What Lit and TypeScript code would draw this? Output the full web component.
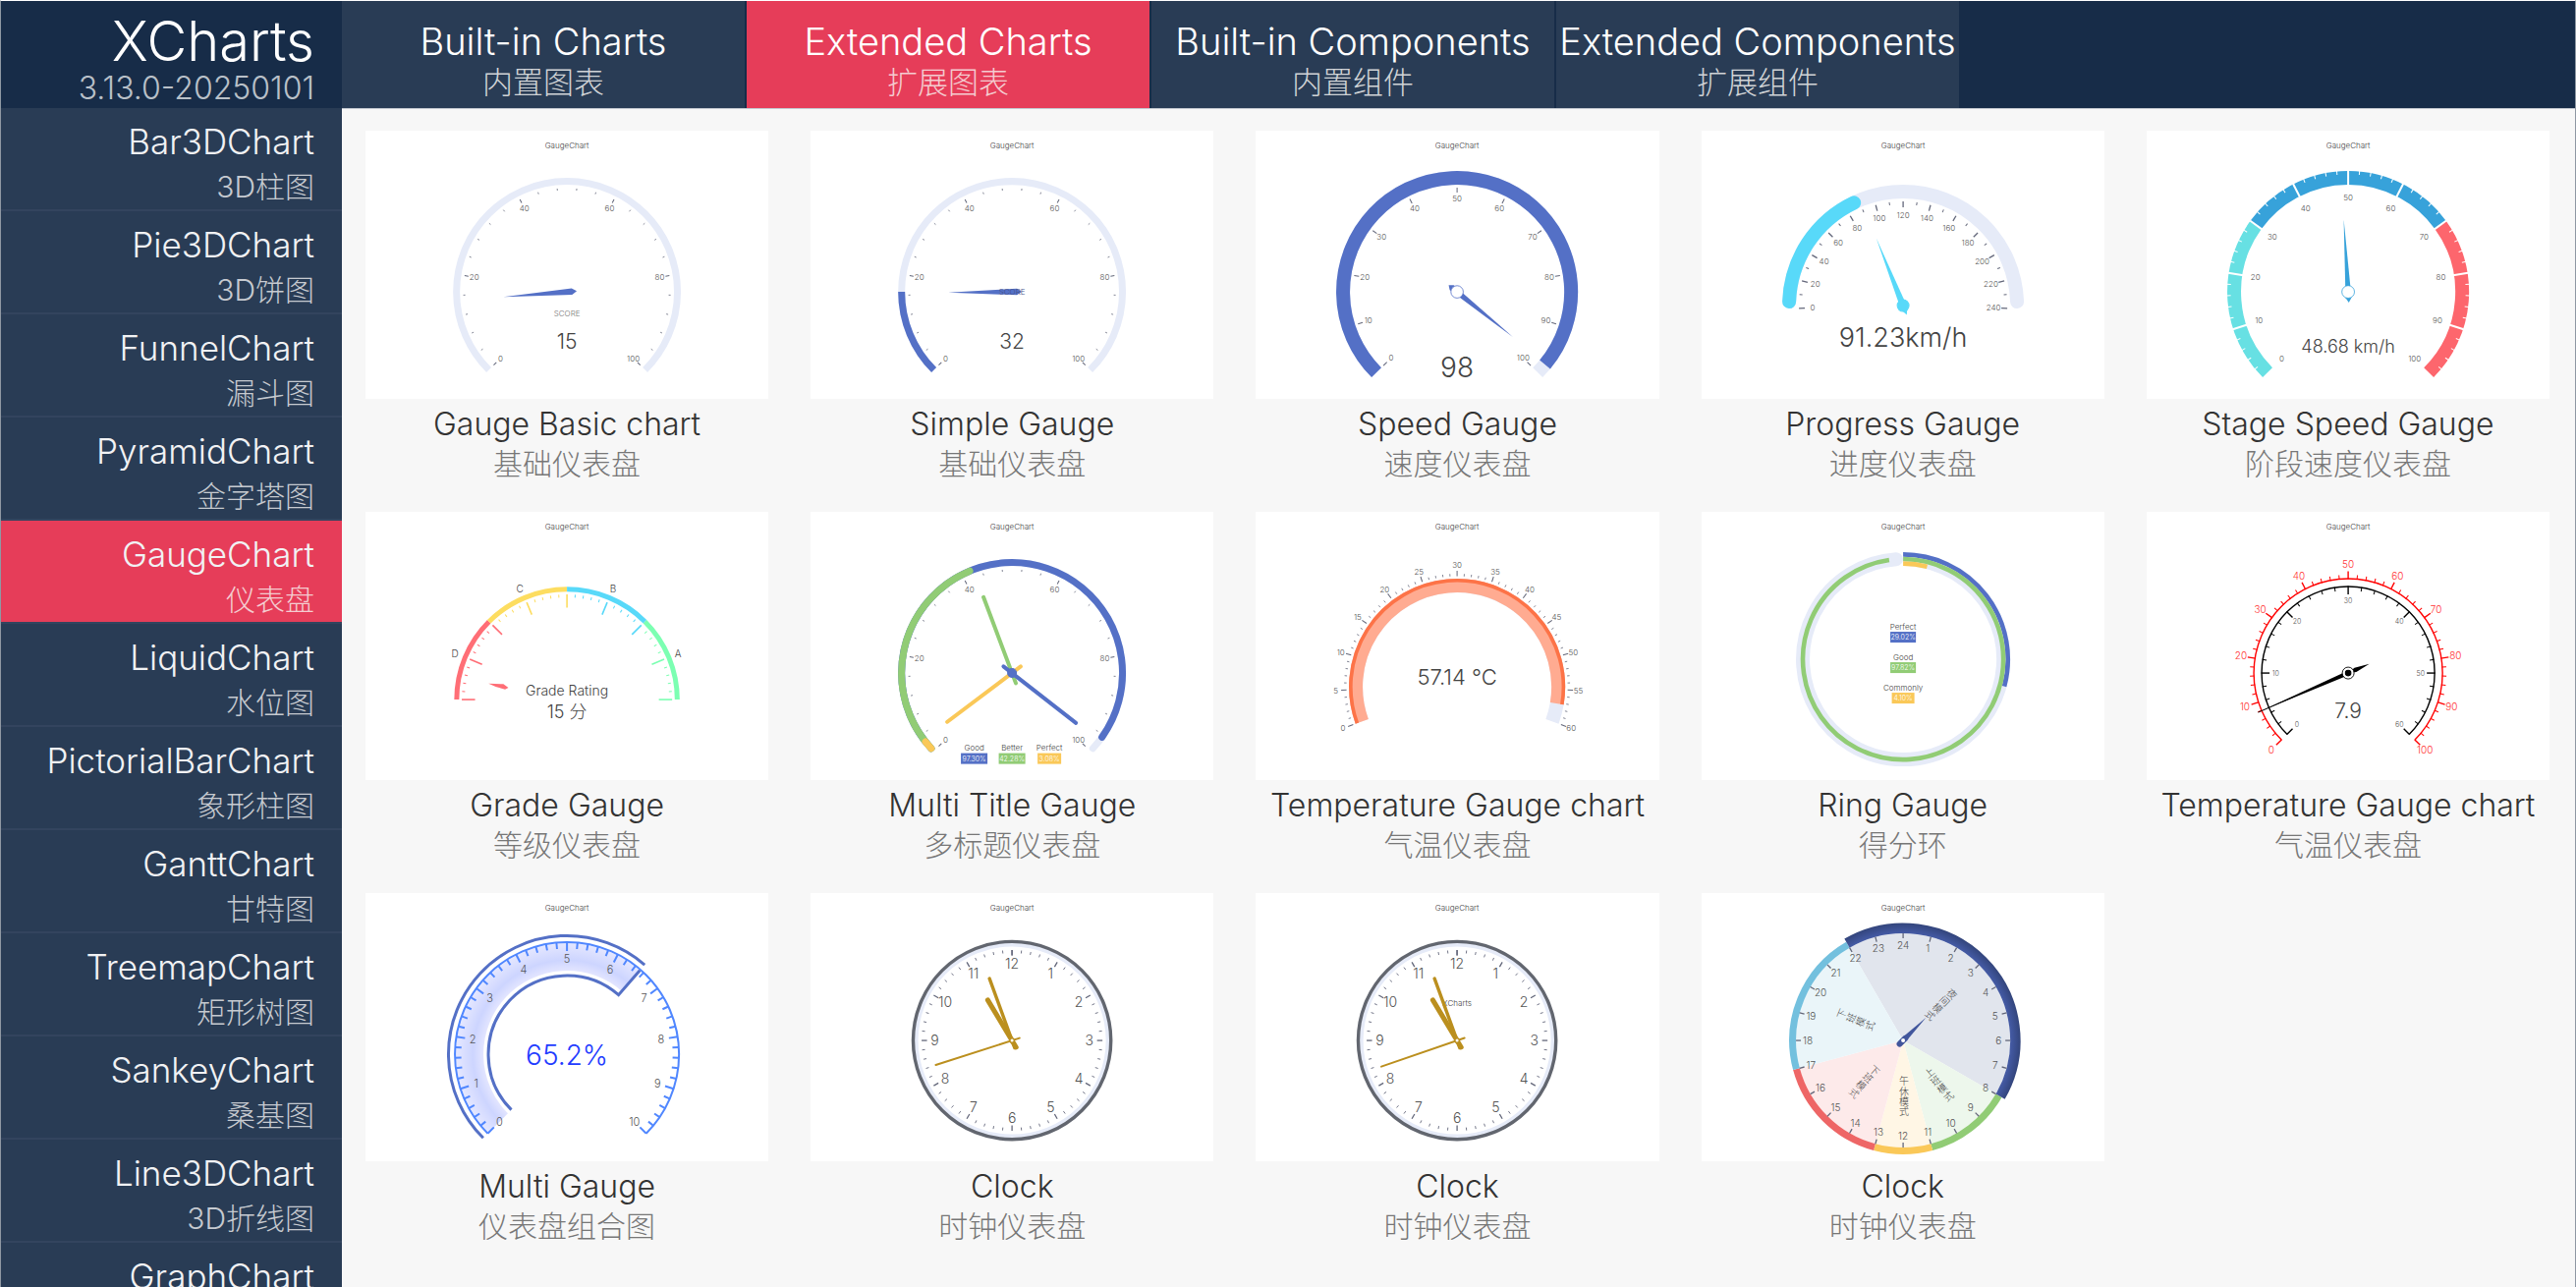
import { LitElement, html, svg, css, type SVGTemplateResult } from "lit";
import { customElement, property, state } from "lit/decorators.js";

type Shape = SVGTemplateResult;

const BLUE = "#5470c6";
const GREEN = "#91cc75";
const YELLOW = "#fac858";
const TRACK = "#e6ebf8";
const CYAN = "#58d9f9";
const TICK = "#63677a";
const INK = "#444";
const CX = 205;

/** Angles are degrees clockwise from twelve o'clock. */
const pt = (cy: number, r: number, a: number): [number, number] => {
  const t = (a * Math.PI) / 180;
  return [CX + r * Math.sin(t), cy - r * Math.cos(t)];
};
const f = (n: number) => n.toFixed(2);
const join = (points: [number, number][]) => points.map(([x, y]) => `${f(x)},${f(y)}`).join(" ");

const arc = (cy: number, r: number, w: number, a0: number, a1: number, color: string, cap: "butt" | "round" = "butt"): Shape => {
  const [x0, y0] = pt(cy, r, a0);
  const [x1, y1] = pt(cy, r, a1);
  const large = a1 - a0 > 180 ? 1 : 0;
  return svg`<path d="M${f(x0)} ${f(y0)}A${r} ${r} 0 ${large} 1 ${f(x1)} ${f(y1)}" fill="none" stroke=${color} stroke-width=${w} stroke-linecap=${cap}></path>`;
};

const sector = (cy: number, r: number, a0: number, a1: number, color: string): Shape => {
  const [x0, y0] = pt(cy, r, a0);
  const [x1, y1] = pt(cy, r, a1);
  return svg`<path d="M${CX} ${cy}L${f(x0)} ${f(y0)}A${r} ${r} 0 ${a1 - a0 > 180 ? 1 : 0} 1 ${f(x1)} ${f(y1)}Z" fill=${color}></path>`;
};

const ray = (cy: number, r0: number, r1: number, a: number, color: string, w = 1, cap: "butt" | "round" = "butt"): Shape => {
  const [x0, y0] = pt(cy, r0, a);
  const [x1, y1] = pt(cy, r1, a);
  return svg`<line x1=${f(x0)} y1=${f(y0)} x2=${f(x1)} y2=${f(y1)} stroke=${color} stroke-width=${w} stroke-linecap=${cap}></line>`;
};

const range = (n: number) => Array.from({ length: n }, (_, i) => i);

interface Scale {
  cy: number; from: number; to: number; major: number; minor: number;
  r: number; long: number; short: number; color?: string; w?: number; thin?: number;
}
const ticks = (s: Scale): Shape[] =>
  range(s.major * s.minor + 1).map((i) => {
    const a = s.from + ((s.to - s.from) * i) / (s.major * s.minor);
    const big = i % s.minor === 0;
    return ray(s.cy, s.r, s.r + (big ? s.long : s.short), a, s.color ?? TICK, big ? s.w ?? 1 : s.thin ?? 0.8);
  });

const label = (x: number, y: number, size: number, text: string, color = INK): Shape =>
  svg`<text x=${f(x)} y=${f(y + size * 0.36)} font-size=${size} fill=${color}>${text}</text>`;

const labels = (cy: number, r: number, from: number, to: number, texts: (string | number)[], size: number, color = "#555"): Shape[] =>
  texts.map((t, i) => {
    const [x, y] = pt(cy, r, from + ((to - from) * i) / (texts.length - 1));
    return label(x, y, size, String(t), color);
  });

const needle = (cy: number, a: number, len: number, wideAt: number, half: number, tail: number, color: string): Shape => {
  const side = (s: number): [number, number] => {
    const [x, y] = pt(cy, wideAt, a);
    const t = (a * Math.PI) / 180;
    return [x + s * half * Math.cos(t), y + s * half * Math.sin(t)];
  };
  return svg`<polygon points=${join([pt(cy, len, a), side(1), pt(cy, tail, a), side(-1)])} fill=${color}></polygon>`;
};

const ring = (cy: number, r: number, w: number, color: string, fill = "none"): Shape =>
  svg`<circle cx=${CX} cy=${cy} r=${r} fill=${fill} stroke=${color} stroke-width=${w}></circle>`;

const badge = (x: number, y: number, w: number, title: string, value: string, color: string): Shape => svg`
  ${label(x, y, 8, title)}
  <rect x=${x - w / 2} y=${y + 5} width=${w} height="11" fill=${color}></rect>
  ${label(x, y + 10.5, 7, value, "#fff")}`;

const HUNDRED = [0, 20, 40, 60, 80, 100];
const TENS = range(11).map((i) => i * 10);

const basicScale = (cy: number) => [
  ticks({ cy, from: -135, to: 135, major: 5, minor: 5, r: 105.5, long: -4, short: -2 }),
  labels(cy, 95.5, -135, 135, HUNDRED, 8),
];

const basicGauge = () => svg`
  ${arc(164, 112.4, 7, -135, 135, TRACK)}${basicScale(164)}
  ${needle(164, -94.5, 65, -5, 3.3, -10, BLUE)}
  ${label(CX, 186, 8, "SCORE", "#777")}${label(CX, 214, 21, "15")}`;

const simpleGauge = () => svg`
  ${arc(164, 112.4, 7, -135, 135, TRACK)}${arc(164, 112.4, 7, -135, -90, BLUE)}${basicScale(164)}
  ${needle(164, -90.5, 65, -5, 3.3, -10, BLUE)}
  ${label(CX, 164, 8, "SCORE", "#44508a")}${label(CX, 214, 21, "32")}`;

const speedGauge = () => svg`
  ${arc(164, 116, 14, -135, 135, TRACK)}${arc(164, 116, 14, -135, 129.6, BLUE)}
  ${ticks({ cy: 164, from: -135, to: 135, major: 10, minor: 1, r: 106, long: -5, short: 0 })}
  ${labels(164, 95, -135, 135, TENS, 8)}
  ${needle(164, 129, 73, -7, 3.2, -11, BLUE)}${ring(164, 6.3, 0.8, BLUE, "#fff")}
  ${label(CX, 241, 28, "98")}`;

const progressGauge = () => svg`
  ${arc(178, 116, 14, -88, 88, TRACK, "round")}${arc(178, 116, 14, -88, -25.5, CYAN, "round")}
  ${ticks({ cy: 178, from: -91.5, to: 91.5, major: 12, minor: 2, r: 106, long: -6, short: -3, w: 1.3, thin: 1 })}
  ${labels(178, 92, -91.5, 91.5, range(13).map((i) => i * 20), 8)}
  ${needle(178, -21.7, 74, -3, 3.5, -10, CYAN)}${ring(178, 6, 1, CYAN, CYAN)}
  ${label(CX, 210.5, 27, "91.23km/h")}`;

const stageGauge = () => svg`
  ${arc(164, 116, 14, -135, -54, "#67e0e3")}${arc(164, 116, 14, -54, 54, "#37a2da")}${arc(164, 116, 14, 54, 135, "#fd666d")}
  ${range(51).slice(1, 50).map((i) => ray(164, 123.5, i % 5 ? 119.5 : 108, -135 + i * 5.4, "#fff", i % 5 ? 1 : 2))}
  ${labels(164, 95.5, -135, 135, TENS, 8)}
  ${needle(164, -3.5, 74, -6, 3, -11, "#37a2da")}${ring(164, 6.4, 0.8, "#37a2da", "#fff")}
  ${label(CX, 219, 18, "48.68 km/h")}`;

const GRADES = ["#ff6e76", "#fddd60", CYAN, "#7cffb2"];
const gradeGauge = () => svg`
  ${GRADES.map((c, i) => arc(191, 112.2, 5, -90 + i * 45, -45 + i * 45, c))}
  ${range(41).map((i) =>
    ray(191, 107, i % 5 ? 104 : 93.5, -90 + i * 4.5, GRADES[Math.max(0, Math.ceil(i / 10) - 1)], i % 5 ? 1 : 1.6))}
  ${label(91, 144, 10, "D")}${label(157, 78, 10, "C")}${label(252, 78, 10, "B")}${label(318, 144, 10, "A")}
  <polygon points="125.2,174.7 140.3,175.3 145.4,179 142,180.6 132.5,178" fill=${GRADES[0]}></polygon>
  ${label(CX, 182, 14, "Grade Rating")}${label(CX, 203, 18, "15 分")}`;

const multiTitle = () => svg`
  ${arc(164, 112.4, 7, -133, 133, TRACK, "round")}${arc(164, 112.4, 7, -133, 125.5, BLUE, "round")}
  ${arc(164, 112.4, 7, -133, -22.5, GREEN, "round")}${arc(164, 112.4, 7, -133, -128.5, YELLOW, "round")}
  ${basicScale(164)}
  ${ray(164, -11, 82.5, -127, YELLOW, 4, "round")}${ray(164, -11, 82.5, -20.6, GREEN, 4, "round")}
  ${ray(164, -11, 82.5, 128, BLUE, 4, "round")}${ring(164, 4.5, 1, BLUE, BLUE)}
  ${badge(166.5, 240.5, 27, "Good", "97.30%", BLUE)}${badge(205, 240.5, 27, "Better", "42.28%", GREEN)}
  ${badge(243, 240.5, 24, "Perfect", "3.08%", YELLOW)}`;

const temperature = () => svg`
  ${arc(178, 103, 14, -110, 110, TRACK)}${arc(178, 103, 14, -110, 99.5, "#ffab91")}
  ${arc(178, 108.2, 3.6, -110, 99.5, "#fd7347")}
  ${ticks({ cy: 178, from: -110, to: 110, major: 12, minor: 5, r: 112.5, long: 5.5, short: 2.5 })}
  ${labels(178, 123.5, -110, 110, range(13).map((i) => i * 5), 8)}
  ${label(CX, 168, 22, "57.14 ℃")}`;

const ringGauge = () => svg`
  ${arc(150, 102, 14, 4, 356, TRACK, "round")}
  ${arc(150, 106.6, 4.6, 0, 105, BLUE)}${arc(150, 102, 4.6, 0, 352, GREEN)}${arc(150, 97.4, 4.6, 0, 14.5, YELLOW)}
  ${badge(CX, 117, 26, "Perfect", "29.02%", BLUE)}${badge(CX, 148, 26, "Good", "97.82%", GREEN)}
  ${badge(CX, 179, 23, "Commonly", "4.10%", YELLOW)}`;

const dualScale = () => svg`
  ${arc(164, 96, 1.4, -135, 135, "#f00")}
  ${ticks({ cy: 164, from: -135, to: 135, major: 10, minor: 5, r: 95.5, long: 8, short: 4.5, color: "#f00", w: 1.4, thin: 1 })}
  ${labels(164, 110.5, -135, 135, TENS, 10, "#f33")}
  ${arc(164, 88, 1.4, -135, 135, "#000")}
  ${ticks({ cy: 164, from: -135, to: 135, major: 6, minor: 5, r: 88.5, long: -8.5, short: -4.5, color: "#000", w: 1.4, thin: 1 })}
  ${labels(164, 73.7, -135, 135, [0, 10, 20, 30, 40, 50, 60], 7)}
  ${needle(164, -113.6, 100, 0, 2.2, -1, "#000")}${ray(164, 60, 100, -113.6, "#000", 1)}
  ${needle(164, -113.6, 0, -8, 2.4, -23.5, "#000")}
  ${ring(164, 6, 0.9, "#000", "#fff")}${ring(164, 2.8, 1, "#000", "#000")}
  ${label(CX, 202, 21, "7.9")}`;

const multiGauge = () => {
  const [ex, ey] = pt(164, 113, 41);
  const [ix, iy] = pt(164, 80, 41);
  const [sx, sy] = pt(164, 80, -135);
  return svg`
  <defs><radialGradient id="band" gradientUnits="userSpaceOnUse" cx=${CX} cy="164" r="114">
    <stop offset="0.74" stop-color="#e4e6ff"></stop><stop offset="0.84" stop-color="#cdd5ff"></stop>
    <stop offset="1" stop-color="#e6e8ff"></stop></radialGradient></defs>
  ${arc(164, 99, 28, -135, 41, "url(#band)")}
  ${arc(164, 120.5, 3, -135, 41, BLUE)}
  ${arc(164, 114, 2, -135, 135, "#5087ff")}
  ${ticks({ cy: 164, from: -135, to: 135, major: 10, minor: 5, r: 114, long: -9, short: -6.5, color: "#5087ff", w: 2, thin: 2 })}
  <path d="M${f(sx)} ${f(sy)}A80 80 0 0 1 ${f(ix)} ${f(iy)}L${f(ex)} ${f(ey)}" fill="none" stroke=${BLUE} stroke-width="3"></path>
  ${labels(164, 97, -135, 135, range(11), 11)}
  ${label(CX, 164.5, 28, "65.2%", "#1f3cff")}`;
};

const GOLD = "#bb8f1e";
const clock = (second: number, mark = "") => svg`
  ${ring(150, 97.5, 4, TRACK)}${ring(150, 100.6, 3.4, "#62666f")}
  ${ticks({ cy: 150, from: 0, to: 360, major: 12, minor: 5, r: 92, long: -5.5, short: -3, w: 1.3, thin: 0.9 })}
  ${labels(150, 78.5, 30, 360, range(12).map((i) => i + 1), 14)}
  ${mark ? label(CX, 112, 8, mark) : ""}
  ${ray(150, -8, 48, -31, GOLD, 5, "round")}${ray(150, -8, 67, -20, GOLD, 3.4, "round")}
  ${ray(150, -8, 81.5, second, GOLD, 2, "round")}${ring(150, 2.2, 1.4, GOLD, "#fff")}`;

const stack = (x: number, y: number, turn: number, text: string): Shape => svg`
  <g transform="translate(${x} ${y}) rotate(${turn})">
    ${[...text].map((c, i) => label(0, (i - (text.length - 1) / 2) * 10.3, 10, c, "#444"))}
  </g>`;

const dayPlan = () => svg`
  <defs><radialGradient id="night" gradientUnits="userSpaceOnUse" cx=${CX} cy="150" r="119.5">
    <stop offset="0.92" stop-color="#4359a2"></stop><stop offset="1" stop-color="#33457c"></stop></radialGradient></defs>
  ${sector(150, 109, -30, 120, "#e1e5ed")}${sector(150, 109, 120, 165, "#edf7ec")}
  ${sector(150, 109, 165, 195, "#fff6e5")}${sector(150, 109, 195, 255, "#fdeaea")}
  ${sector(150, 109, 255, 330, "#eaf5f9")}
  ${arc(150, 112.4, 7, 120, 165, GREEN)}${arc(150, 112.4, 7, 165, 195, YELLOW)}
  ${arc(150, 112.4, 7, 195, 255, "#ee6666")}${arc(150, 112.4, 7, 255, 330, "#73c0de")}
  ${arc(150, 114.2, 10.5, -30, 120, "url(#night)")}
  ${ticks({ cy: 150, from: 0, to: 345, major: 23, minor: 1, r: 109, long: -5, short: 0, w: 1.3 })}
  ${labels(150, 97, 15, 360, range(24).map((i) => i + 1), 10)}
  ${stack(243.5, 113.5, 45, "夜间模式")}${stack(241.5, 195, -39, "上班模式")}${stack(206, 207, 0, "午休模式")}
  ${stack(165.5, 192, 42, "下班模式")}${stack(157, 129, -67, "下班模式")}
  ${needle(150, 45, 33, 4, 2.6, -6, "#41569c")}${ray(150, -5, 3, 45, "#41569c", 6, "round")}
  ${ring(150, 2, 0, "none", "#fff")}`;

interface Demo { name: string; sub: string; draw: () => Shape; }
const DEMOS: Demo[] = [
  { name: "Gauge Basic chart", sub: "基础仪表盘", draw: basicGauge },
  { name: "Simple Gauge", sub: "基础仪表盘", draw: simpleGauge },
  { name: "Speed Gauge", sub: "速度仪表盘", draw: speedGauge },
  { name: "Progress Gauge", sub: "进度仪表盘", draw: progressGauge },
  { name: "Stage Speed Gauge", sub: "阶段速度仪表盘", draw: stageGauge },
  { name: "Grade Gauge", sub: "等级仪表盘", draw: gradeGauge },
  { name: "Multi Title Gauge", sub: "多标题仪表盘", draw: multiTitle },
  { name: "Temperature Gauge chart", sub: "气温仪表盘", draw: temperature },
  { name: "Ring Gauge", sub: "得分环", draw: ringGauge },
  { name: "Temperature Gauge chart", sub: "气温仪表盘", draw: dualScale },
  { name: "Multi Gauge", sub: "仪表盘组合图", draw: multiGauge },
  { name: "Clock", sub: "时钟仪表盘", draw: () => clock(-107.8) },
  { name: "Clock", sub: "时钟仪表盘", draw: () => clock(-109, "XCharts") },
  { name: "Clock", sub: "时钟仪表盘", draw: dayPlan },
];

const TABS = [
  ["Built-in Charts", "内置图表"],
  ["Extended Charts", "扩展图表"],
  ["Built-in Components", "内置组件"],
  ["Extended Components", "扩展组件"],
];

const CHARTS = [
  ["Bar3DChart", "3D柱图"],
  ["Pie3DChart", "3D饼图"],
  ["FunnelChart", "漏斗图"],
  ["PyramidChart", "金字塔图"],
  ["GaugeChart", "仪表盘"],
  ["LiquidChart", "水位图"],
  ["PictorialBarChart", "象形柱图"],
  ["GanttChart", "甘特图"],
  ["TreemapChart", "矩形树图"],
  ["SankeyChart", "桑基图"],
  ["Line3DChart", "3D折线图"],
  ["GraphChart", "关系图"],
];

@customElement("chart-card")
export class ChartCard extends LitElement {
  @property({ attribute: false }) demo!: Demo;

  static styles = css`
    :host { display: block; }
    .card { margin: 0; text-align: center; }
    .plot { display: block; width: 100%; height: auto; background: #fff; }
    .plot text {
      text-anchor: middle;
      font-family: Inter, "Noto Sans CJK SC", sans-serif;
      font-weight: 300;
    }
    .name, .sub { display: block; line-height: 40px; white-space: nowrap; }
    .name { padding-top: 6px; font-size: 32px; color: #333; }
    .sub { font-size: 30px; color: #777; }
  `;

  render() {
    return html`<figure class="card">
      <svg class="plot" viewBox="0 0 410 273" role="img" aria-label=${this.demo.name}>
        ${label(CX, 15, 8, "GaugeChart")}${this.demo.draw()}
      </svg>
      <figcaption><span class="name">${this.demo.name}</span><span class="sub">${this.demo.sub}</span></figcaption>
    </figure>`;
  }
}

@customElement("app-root")
export class AppRoot extends LitElement {
  @state() private tab = 1;
  @state() private chart = 4;

  static styles = css`
    :host {
      box-sizing: border-box;
      display: grid;
      grid-template-columns: 347px 1fr;
      grid-template-rows: 109px 1fr;
      height: 100vh;
      overflow: hidden;
      border: solid #8f98a3;
      border-width: 1px 1px 0;
      border-top-color: #fff;
      background: #f7f7f7;
      font-family: Inter, "Noto Sans CJK SC", sans-serif;
      font-weight: 300;
    }
    button { border: 0; padding: 0; margin: 0; font: inherit; color: inherit; background: none; cursor: pointer; }
    .brand, .tabs { background: #172c48; color: #fff; }
    .brand {
      display: flex;
      flex-direction: column;
      align-items: flex-end;
      padding: 12px 28px 0 0;
    }
    .logo { margin: 0; font-size: 56px; line-height: 59px; font-weight: 300; }
    .version { font-size: 32px; line-height: 36px; color: #b9c0c8; }
    .tabs { display: flex; gap: 2px; }
    .tab {
      display: flex;
      flex-direction: column;
      align-items: center;
      width: 410px;
      padding-top: 20px;
      background: #293c55;
      white-space: nowrap;
    }
    .tab .name { font-size: 38px; line-height: 43px; color: #fff; }
    .tab .sub { font-size: 31px; line-height: 40px; color: #d0d3d6; }
    .side { overflow: hidden; background: #293c55; }
    .item {
      box-sizing: border-box;
      display: flex;
      flex-direction: column;
      align-items: flex-end;
      width: 100%;
      height: 105px;
      padding: 13px 28px 0 0;
      border-bottom: 2px solid #33445e;
      white-space: nowrap;
    }
    .item .name { font-size: 35px; line-height: 42px; color: #f1f2f4; }
    .item .sub { padding-top: 4px; font-size: 30px; line-height: 42px; color: #c6cad0; }
    .tab.active, .item.active { background: #e63d59; }
    .item.active .sub, .tab.active .sub { color: #f4ccd0; }
    .main { overflow: hidden; padding: 22px 26px 0 24px; border-top: 1px solid #c4c9d0; }
    .grid { display: grid; grid-template-columns: repeat(5, minmax(0, 1fr)); gap: 29px 43px; }
  `;

  render() {
    return html`
      <header class="brand"><h1 class="logo">XCharts</h1><span class="version">3.13.0-20250101</span></header>
      <nav class="tabs" aria-label="Sections">
        ${TABS.map(([name, sub], i) => html`<button class="tab ${i === this.tab ? "active" : ""}" @click=${() => (this.tab = i)}>
          <span class="name">${name}</span><span class="sub">${sub}</span>
        </button>`)}
      </nav>
      <nav class="side" aria-label="Charts">
        ${CHARTS.map(([name, sub], i) => html`<button class="item ${i === this.chart ? "active" : ""}" @click=${() => (this.chart = i)}>
          <span class="name">${name}</span><span class="sub">${sub}</span>
        </button>`)}
      </nav>
      <main class="main"><div class="grid">${DEMOS.map((d) => html`<chart-card .demo=${d}></chart-card>`)}</div></main>
    `;
  }
}
